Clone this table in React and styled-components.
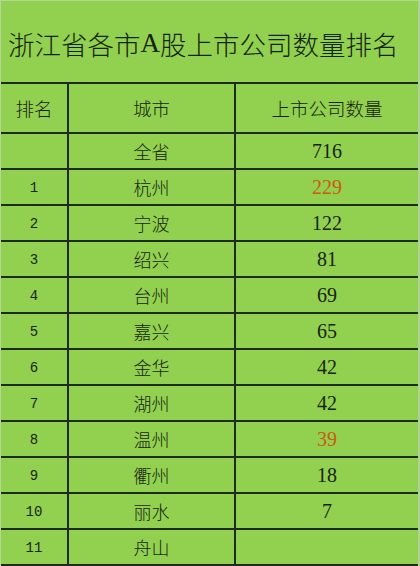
import React from 'react'
import styled, { createGlobalStyle } from 'styled-components'

const GlobalStyle = createGlobalStyle`
  html, body {
    margin: 0;
    padding: 0;
    background: #92d050;
  }
`

const Sheet = styled.div`
  width: 420px;
  height: 566px;
  box-sizing: border-box;
  background: #92d050;
  border-top: 1px solid #b9d49a;
  border-left: 1px solid #b9d49a;
  border-right: 2px solid #b3cf93;
  display: flex;
  flex-direction: column;
  overflow: hidden;
`

const Title = styled.div`
  height: 81px;
  display: flex;
  align-items: center;
  padding: 4px 0 0 7px;
  box-sizing: border-box;
  font-family: "Noto Sans CJK SC", "Noto Sans CJK JP", sans-serif;
  font-weight: 300;
  font-size: 26.5px;
  color: #14240c;
  white-space: nowrap;
`

const Latin = styled.span`
  font-family: "Liberation Serif", serif;
  font-weight: 400;
  font-size: 27px;
`

const Table = styled.div`
  border-top: 2px solid #1c2b1c;
  display: flex;
  flex-direction: column;
`

const Row = styled.div`
  display: grid;
  grid-template-columns: 68px 167px 1fr;
  height: ${p => (p.$head ? 50 : 36)}px;
  box-sizing: border-box;
  border-bottom: 2px solid #1c2b1c;
`

const Cell = styled.div`
  display: flex;
  align-items: center;
  justify-content: center;
  border-right: ${p => (p.$last ? 'none' : '2px solid #1c2b1c')};
  color: ${p => p.$color || '#17240f'};
  white-space: nowrap;
`

const HeadCell = styled(Cell)`
  font-family: "Noto Sans CJK SC", sans-serif;
  font-weight: 300;
  font-size: 18.5px;
`

const RankCell = styled(Cell)`
  font-family: "Liberation Mono", "DejaVu Sans Mono", monospace;
  font-size: 14px;
  padding-top: 1px;
`

const CityCell = styled(Cell)`
  font-family: "Noto Sans CJK SC", sans-serif;
  font-weight: 300;
  font-size: 18px;
`

const CountCell = styled(Cell)`
  font-family: "Liberation Serif", serif;
  font-size: 20px;
`

const rows = [
  { rank: '', city: '全省', count: '716' },
  { rank: '1', city: '杭州', count: '229', hot: true },
  { rank: '2', city: '宁波', count: '122' },
  { rank: '3', city: '绍兴', count: '81' },
  { rank: '4', city: '台州', count: '69' },
  { rank: '5', city: '嘉兴', count: '65' },
  { rank: '6', city: '金华', count: '42' },
  { rank: '7', city: '湖州', count: '42' },
  { rank: '8', city: '温州', count: '39', hot: true },
  { rank: '9', city: '衢州', count: '18' },
  { rank: '10', city: '丽水', count: '7' },
  { rank: '11', city: '舟山', count: '' },
]

export default function App() {
  return (
    <>
      <GlobalStyle />
      <Sheet>
        <Title>浙江省各市<Latin>A</Latin>股上市公司数量排名</Title>
        <Table>
          <Row $head>
            <HeadCell>排名</HeadCell>
            <HeadCell>城市</HeadCell>
            <HeadCell $last>上市公司数量</HeadCell>
          </Row>
          {rows.map(r => (
            <Row key={r.city}>
              <RankCell>{r.rank}</RankCell>
              <CityCell>{r.city}</CityCell>
              <CountCell $last $color={r.hot ? '#cc5a12' : undefined}>{r.count}</CountCell>
            </Row>
          ))}
        </Table>
      </Sheet>
    </>
  )
}
